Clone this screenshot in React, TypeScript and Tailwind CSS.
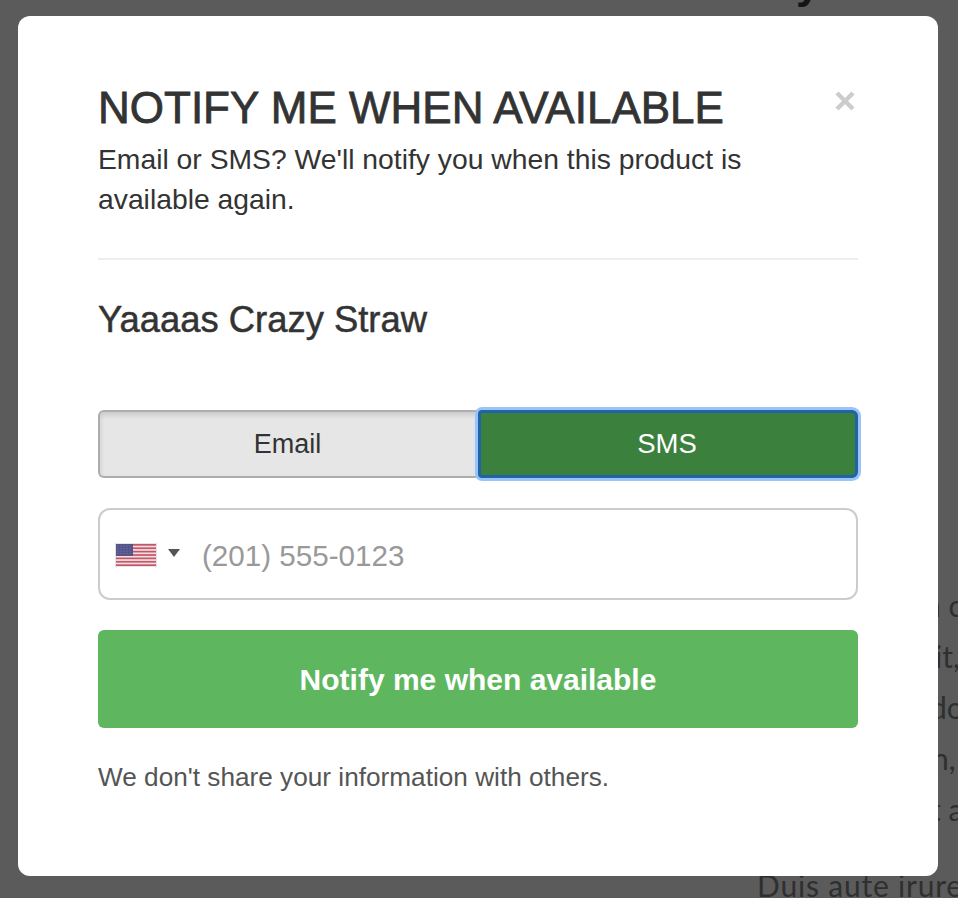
const SANS = 'font-["Liberation_Sans",Arial,sans-serif]';

// Small US flag for the phone input, 13 stripes and a dotted canton
function UsFlag() {
    const stripes = [0, 2, 4, 6, 8, 10, 12];
    const dots = [3, 6, 9, 12, 15];
    const dotRows = [3, 5.5, 8, 10.5];
    return (
        <svg width="42" height="24" viewBox="0 0 42 24" className="mt-[1px] block shrink-0 blur-[0.35px]">
            <rect x="0" y="0" width="42" height="24" fill="#e4e4e4" />
            <rect x="1" y="1" width="40" height="22" fill="#f2dfe2" />
            {stripes.map((i) => (
                <rect key={i} x="1" y={1 + (i * 22) / 13} width="40" height={22 / 13} fill="#c4566a" />
            ))}
            <rect x="1" y="1" width="17" height="12" fill="#54548a" />
            {dotRows.map((y) =>
                dots.map((x) => <circle key={`${x}-${y}`} cx={x} cy={y} r="0.5" fill="#8a8ab0" />),
            )}
        </svg>
    );
}

export default function App() {
    return (
        <div className={`relative h-[898px] w-full overflow-hidden bg-[#5b5b5b] ${SANS}`}>
            {/* Page behind the dimmed backdrop */}
            <div className="absolute left-[796px] top-[-32px] text-[44px] leading-[30px] font-bold text-[#141414]">y</div>
            <div className='absolute left-[938px] top-[580px] font-["Lato",sans-serif] text-[30px] leading-[51px] text-[#2f2f2f] whitespace-nowrap'>
                <div className="ml-[-14px]">n c</div>
                <div className="ml-[-3px]">it,</div>
                <div className="ml-[-8px]">do</div>
                <div className="ml-[-6px]">n,</div>
                <div className="ml-[-8px]">t a</div>
            </div>
            <div className='absolute left-[757px] top-[867px] font-["Lato",sans-serif] text-[30px] tracking-[0.8px] leading-[36px] text-[#2f2f2f] whitespace-nowrap'>
                Duis aute irure
            </div>

            {/* Modal */}
            <div className="absolute left-[18px] top-[16px] h-[860px] w-[920px] rounded-xl bg-white px-20 pt-[66px]">
                <div className="flex items-start justify-between">
                    <div className="w-[680px]">
                        <h1 className="text-[44px] leading-[52px] font-normal whitespace-nowrap text-[#333333] [-webkit-text-stroke:0.8px_#333333]">
                            NOTIFY ME WHEN AVAILABLE
                        </h1>
                        <p className="mt-[5px] text-[28.3px] leading-[40px] text-[#333333]">
                            Email or SMS? We'll notify you when this product is available again.
                        </p>
                    </div>
                    <button type="button" className="mt-[9px] mr-[3px] text-[#cccccc]">
                        <svg width="20" height="20" viewBox="0 0 20 20" className="block">
                            <path d="M2 2 L18 18 M18 2 L2 18" stroke="currentColor" strokeWidth="4.4" fill="none" />
                        </svg>
                    </button>
                </div>

                <div className="mt-[39px] border-t-2 border-[#eeeeee]" />

                <h2 className="mt-[38px] text-[36.4px] leading-[44px] font-normal text-[#333333] [-webkit-text-stroke:0.5px_#333333]">
                    Yaaaas Crazy Straw
                </h2>

                {/* Email / SMS toggle */}
                <div className="mt-[68px] flex h-[68px]">
                    <button
                        type="button"
                        className="h-full w-[380px] rounded-l-md border-2 border-r-0 border-[#adadad] bg-[#e6e6e6] pr-[3px] text-[27px] text-[#333333] shadow-[inset_0_3px_5px_rgba(0,0,0,0.125)]"
                    >
                        Email
                    </button>
                    <button
                        type="button"
                        className="h-full w-[380px] rounded-r-md rounded-l-sm border-[3px] border-[#1f63a8] bg-[#3c803e] pr-[2px] text-[27.5px] text-white shadow-[0_0_0_3px_#9cc3f7]"
                    >
                        SMS
                    </button>
                </div>

                {/* Phone input */}
                <div className="mt-[30px] flex h-[92px] items-center rounded-xl border-2 border-[#cccccc] bg-white pl-[15px]">
                    <UsFlag />
                    <span className="ml-[11px] mb-[2px] h-0 w-0 border-x-[6px] border-t-[8px] border-x-transparent border-t-[#555555]" />
                    <input
                        type="text"
                        placeholder="(201) 555-0123"
                        className="ml-[22px] min-w-0 flex-1 bg-transparent pt-[5px] text-[29.6px] text-[#333333] outline-none placeholder:text-[#999999]"
                    />
                </div>

                <button
                    type="button"
                    className="mt-[30px] h-[98px] w-full rounded-md bg-[#5eb75f] text-[30px] font-bold text-white"
                >
                    Notify me when available
                </button>

                <p className="mt-[32px] text-[26.2px] leading-[34px] text-[#555555]">
                    We don't share your information with others.
                </p>
            </div>
        </div>
    );
}
